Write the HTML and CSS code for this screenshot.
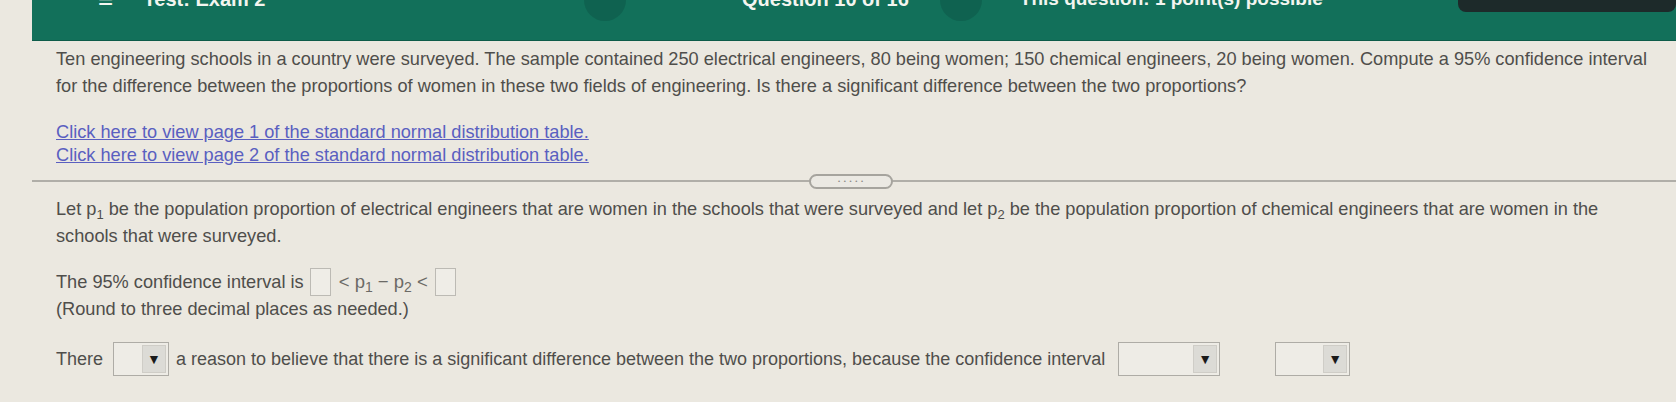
FILE: index.html
```html
<!DOCTYPE html>
<html lang="en">
<head>
<meta charset="UTF-8">
<title>Test: Exam 2</title>
<link rel="stylesheet" href="styles.css">
</head>
<body>
<header class="topbar">
  <div class="topbar-row">
    <span class="menu-icon">&#8801;</span>
    <span class="test-title">Test: Exam 2</span>
    <span class="nav-circle nav-prev"></span>
    <span class="question-count">Question 10 of 16</span>
    <span class="nav-circle nav-next"></span>
    <span class="points">This question: 1 point(s) possible</span>
    <span class="submit-btn"></span>
  </div>
</header>

<main class="question">
  <p class="stem">Ten engineering schools in a country were surveyed. The sample contained 250 electrical engineers, 80 being women; 150 chemical engineers, 20 being women. Compute a 95% confidence interval for the difference between the proportions of women in these two fields of engineering. Is there a significant difference between the two proportions?</p>

  <div class="links">
    <a href="#">Click here to view page 1 of the standard normal distribution table.</a><br>
    <a href="#">Click here to view page 2 of the standard normal distribution table.</a>
  </div>
</main>

<div class="divider">
  <span class="divider-pill"><span class="dots">&bull; &bull; &bull; &bull; &bull;</span></span>
</div>

<section class="question answer">
  <p class="let">Let p<sub>1</sub> be the population proportion of electrical engineers that are women in the schools that were surveyed and let p<sub>2</sub> be the population proportion of chemical engineers that are women in the schools that were surveyed.</p>

  <p class="interval">The 95% confidence interval is <span class="blank"></span><span class="ineq">&lt; p<sub>1</sub> &minus; p<sub>2</sub> &lt;</span><span class="blank"></span></p>
  <p class="hint">(Round to three decimal places as needed.)</p>

  <p class="conclusion">There <span class="dropdown dd-small"><span class="dd-arrow">&#9660;</span></span> a reason to believe that there is a significant difference between the two proportions, because the confidence interval <span class="dropdown dd-wide"><span class="dd-arrow">&#9660;</span></span><span class="dropdown dd-mid"><span class="dd-arrow">&#9660;</span></span></p>
</section>
</body>
</html>
```

FILE: styles.css
```css
body {
  margin: 0;
  background-color: #ebe8e0;
  font-family: "Liberation Sans", Arial, sans-serif;
  color: #4f4e4b;
  overflow: hidden;
}

/* green top bar, page is scrolled so only its lower part shows */
.topbar {
  margin-left: 32px;
  height: 40px;
  background-color: #12705a;
  overflow: hidden;
  border-bottom: 1px solid #0e5c4a;
}
.topbar-row {
  display: flex;
  align-items: flex-end;
  height: 24px;
  margin-top: -13px;
  color: #f3f5ef;
  font-weight: bold;
  font-size: 20px;
  line-height: 24px;
}
.menu-icon {
  margin-left: 66px;
  width: 46px;
  font-size: 26px;
}
.test-title {
  width: 445px;
}
.nav-circle {
  width: 42px;
  height: 42px;
  border-radius: 50%;
  background-color: #0f6250;
  align-self: flex-start;
  margin-top: -8px;
}
.question-count {
  margin-left: 116px;
  width: 200px;
}
.points {
  margin-left: 38px;
  width: 400px;
  font-size: 19px;
}
.submit-btn {
  margin-left: 42px;
  width: 220px;
  height: 30px;
  border-radius: 8px;
  background-color: #1d2a2a;
  align-self: flex-start;
  margin-top: -5px;
}

.question {
  padding: 0 20px 0 56px;
  font-size: 18.2px;
}
.stem {
  margin: 5px 0 0;
  line-height: 26.5px;
  max-width: 1610px;
}
.links {
  margin-top: 22px;
  line-height: 23px;
}
.links a {
  color: #5a5fc0;
  text-decoration: underline;
}

.divider {
  margin: 6px 0 0 32px;
  height: 16px;
  display: flex;
  align-items: center;
  justify-content: center;
  background: linear-gradient(#b0aea8, #b0aea8) center / 100% 2px no-repeat;
}
.divider-pill {
  width: 80px;
  height: 11px;
  margin-left: -6px;
  border: 2px solid #a6a49e;
  border-radius: 8px;
  background-color: #ebe9e3;
  display: flex;
  align-items: center;
  justify-content: center;
}
.dots {
  font-size: 6px;
  color: #8b8a86;
  letter-spacing: 1px;
}

.answer p {
  margin: 0;
}
.let {
  margin-top: 7px !important;
  line-height: 27px;
  max-width: 1560px;
}
sub {
  font-size: 13px;
  vertical-align: -4px;
  line-height: 0;
}
.interval {
  margin-top: 17px !important;
  display: flex;
  align-items: center;
  height: 30px;
}
.blank {
  display: inline-block;
  width: 19px;
  height: 26px;
  border: 1px solid #bcbab4;
  background-color: #efede7;
  margin-left: 6px;
}
.ineq {
  font-size: 18.5px;
  color: #6b6a66;
  margin: 0 1px 0 8px;
  white-space: pre;
}
.ineq sub {
  font-size: 14px;
}
.hint {
  line-height: 25px;
}
.conclusion {
  margin-top: 19px !important;
  display: flex;
  align-items: center;
  white-space: pre;
  height: 36px;
  font-size: 18px;
}
.dropdown {
  display: inline-flex;
  justify-content: flex-end;
  box-sizing: border-box;
  height: 34px;
  border: 1px solid #aeaca6;
  background-color: #eeece6;
  padding: 2px;
}
.dd-small {
  width: 56px;
  margin: 0 2px 0 5px;
}
.dd-wide {
  width: 102px;
  margin-left: 8px;
}
.dd-mid {
  width: 75px;
  margin-left: 55px;
}
.dd-arrow {
  width: 22px;
  background-color: #dcdbd6;
  border: 1px solid #cfcdc7;
  color: #1a1a1a;
  font-size: 14px;
  display: flex;
  align-items: center;
  justify-content: center;
}
```
